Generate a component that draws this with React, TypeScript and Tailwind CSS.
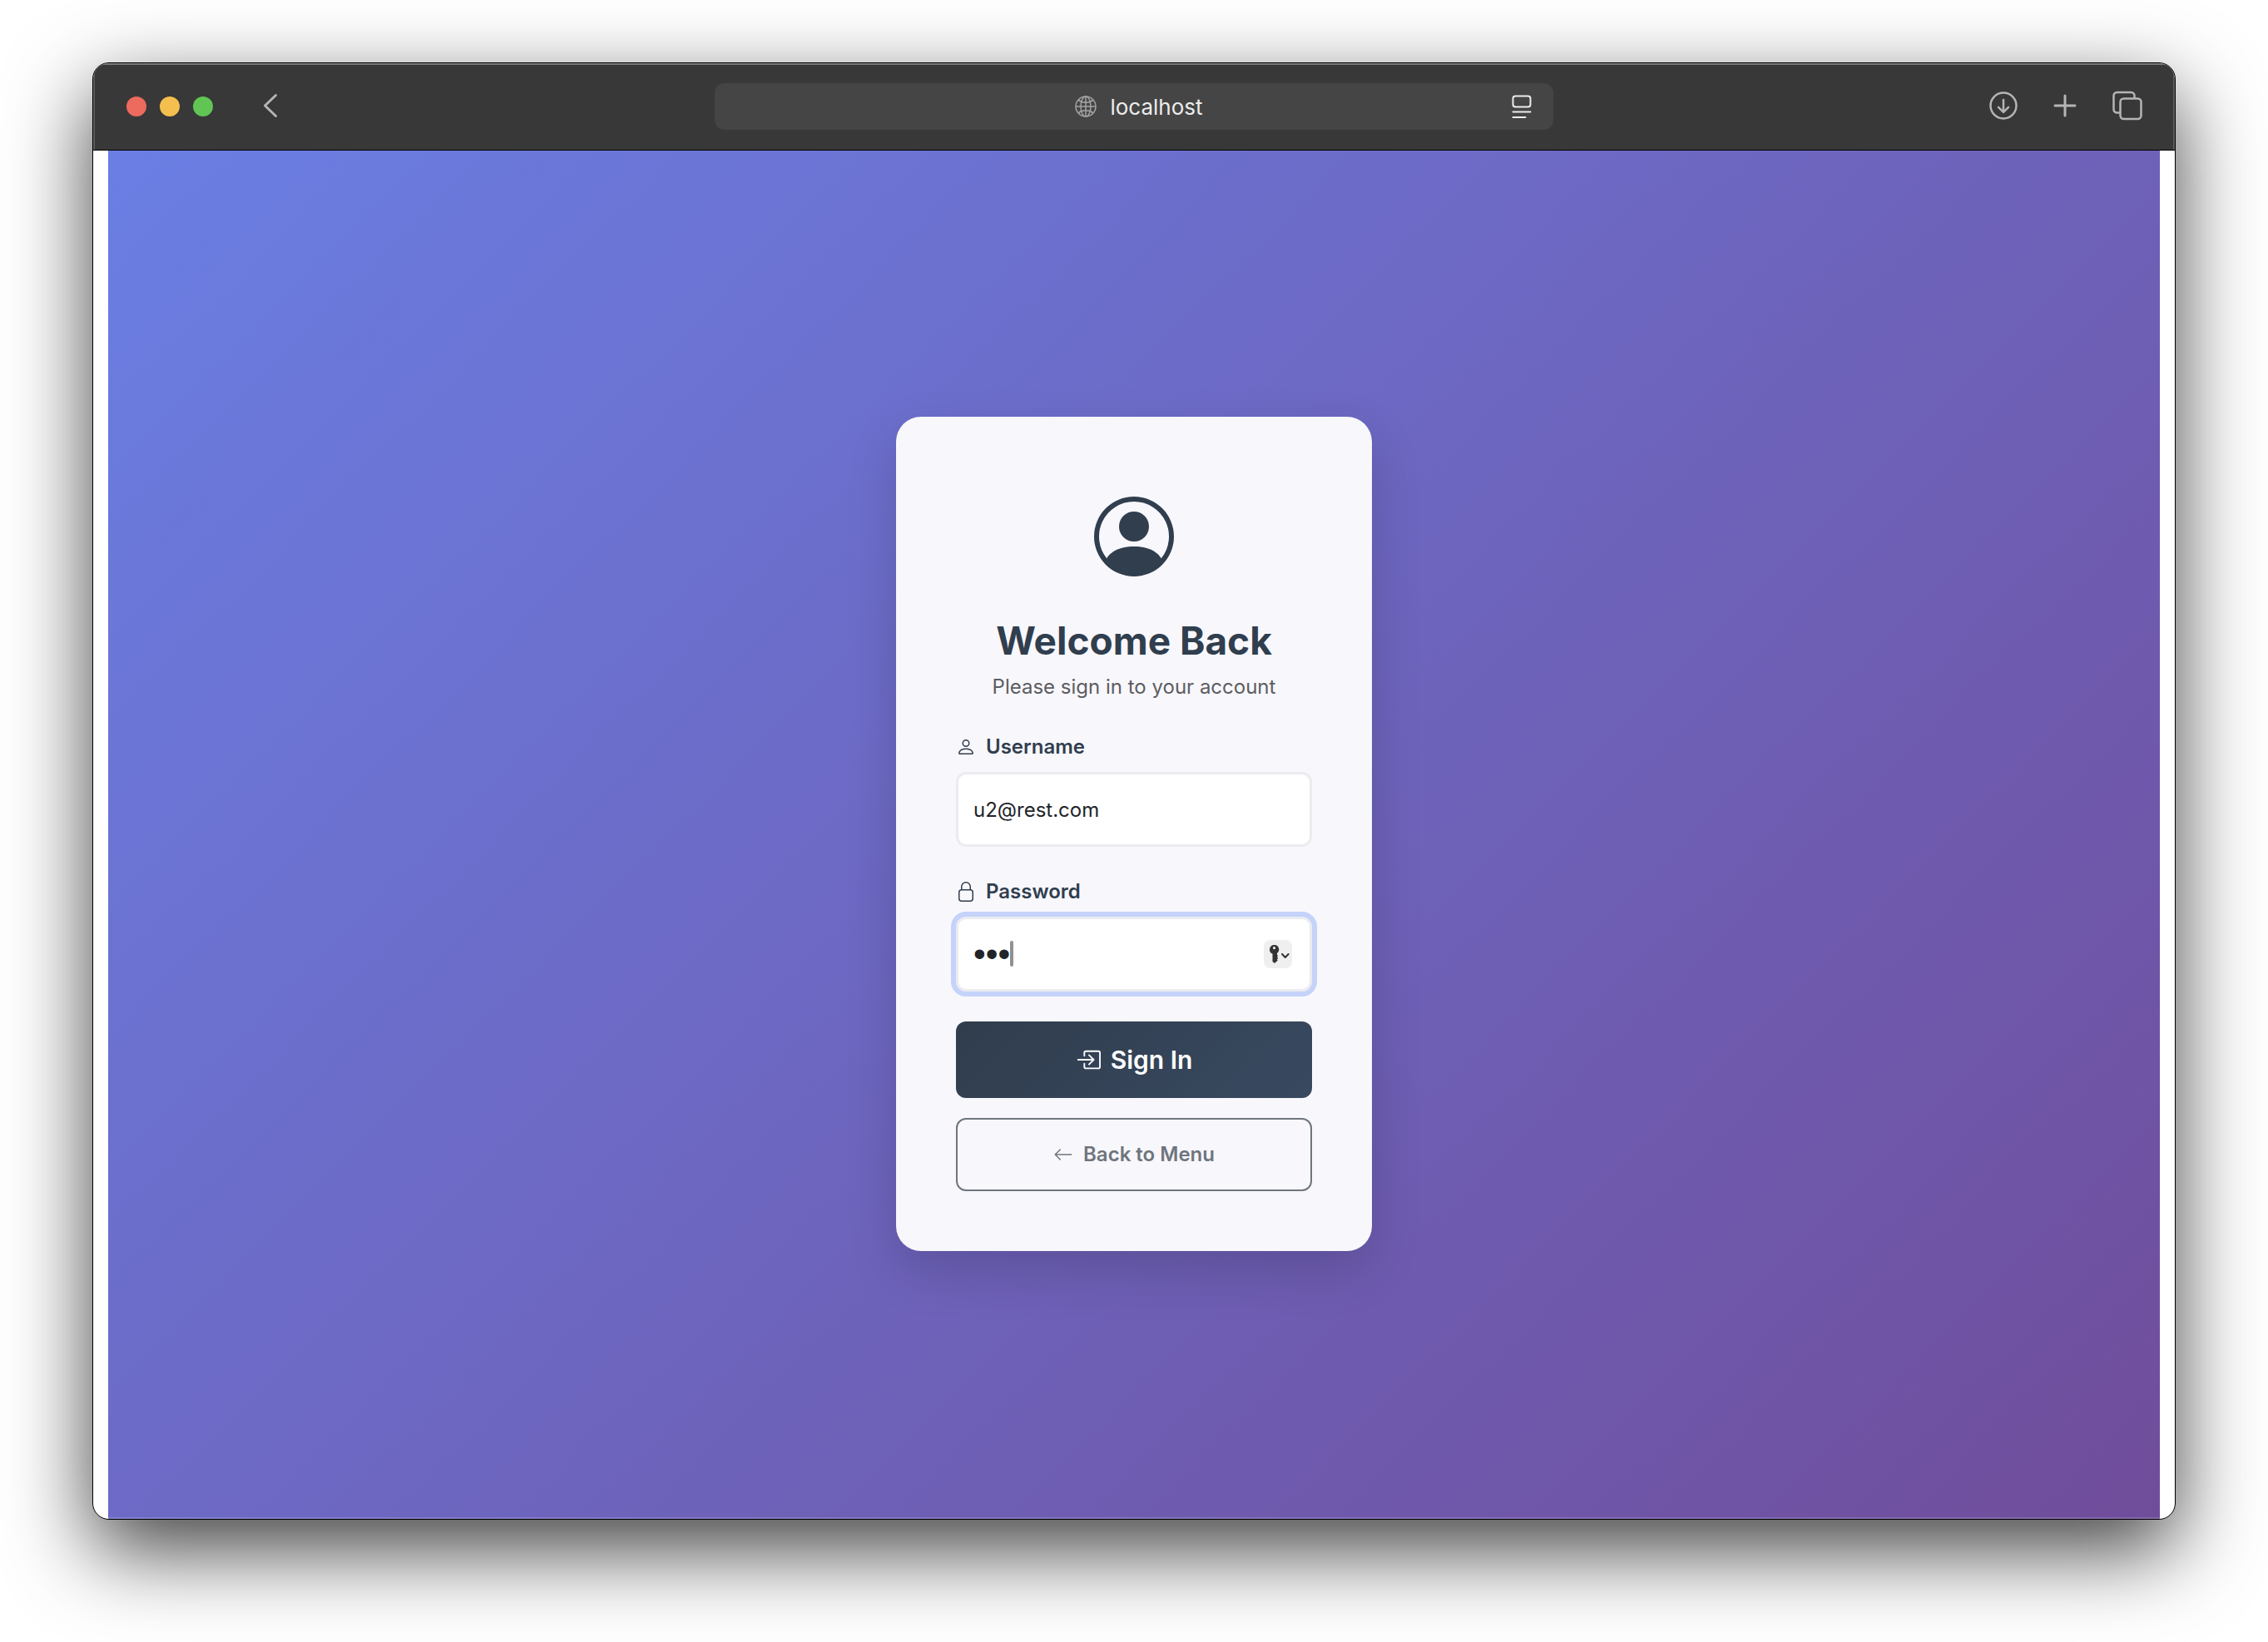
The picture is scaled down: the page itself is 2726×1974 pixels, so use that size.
import type { ReactNode } from "react";
import { BsArrowLeft, BsBoxArrowInRight, BsPersonCircle } from "react-icons/bs";

function BackChevron() {
  return (
    <svg className="h-8 w-5" viewBox="0 0 20 32" fill="none" stroke="currentColor" strokeWidth="3" strokeLinecap="round" strokeLinejoin="round" aria-hidden="true">
      <path d="M16.5 3.5 3.5 16l13 12.5" />
    </svg>
  );
}

function GlobeIcon() {
  return (
    <svg className="size-[26px] text-[#a3a3a3]" viewBox="0 0 26 26" fill="none" stroke="currentColor" strokeWidth="1.5" aria-hidden="true">
      <circle cx="13" cy="13" r="12" />
      <ellipse cx="13" cy="13" rx="6" ry="12" />
      <path d="M13 1v24M1 13h24M4 5.2c2.4 2 5.4 3 9 3s6.6-1 9-3M4 20.8c2.4-2 5.4-3 9-3s6.6 1 9 3" />
    </svg>
  );
}

function ReaderIcon() {
  return (
    <svg className="h-7 w-6" viewBox="0 0 24 28" fill="none" stroke="currentColor" strokeWidth="2" strokeLinecap="round" aria-hidden="true">
      <rect x="1.5" y="1.5" width="21" height="13" rx="3" />
      <path d="M1.5 20.5h21M1.5 27h15" />
    </svg>
  );
}

function DownloadIcon() {
  return (
    <svg className="size-[34px]" viewBox="0 0 34 34" fill="none" stroke="currentColor" strokeWidth="2.5" strokeLinecap="round" strokeLinejoin="round" aria-hidden="true">
      <circle cx="17" cy="17" r="15.5" />
      <path d="M17 10v14.5M11 18.8l6 6 6-6" />
    </svg>
  );
}

function PlusIcon() {
  return (
    <svg className="size-7" viewBox="0 0 28 28" fill="none" stroke="currentColor" strokeWidth="3" strokeLinecap="round" aria-hidden="true">
      <path d="M14 2v24M2 14h24" />
    </svg>
  );
}

function TabsIcon() {
  return (
    <svg className="size-9" viewBox="0 0 36 36" fill="none" stroke="currentColor" strokeWidth="2.5" strokeLinejoin="round" aria-hidden="true">
      <rect x="9.5" y="9.5" width="25" height="24.5" rx="4" />
      <path d="M9.5 26.5H5.5a4 4 0 0 1-4-4V6a4 4 0 0 1 4-4H22.5a4 4 0 0 1 4 4v3.5" />
    </svg>
  );
}

function PersonIcon() {
  return (
    <svg className="size-6" viewBox="0 0 16 16" fill="currentColor" aria-hidden="true">
      <path d="M8 8a3 3 0 1 0 0-6 3 3 0 0 0 0 6m2-3a2 2 0 1 1-4 0 2 2 0 0 1 4 0m4 8c0 1-1 1-1 1H3s-1 0-1-1 1-4 6-4 6 3 6 4m-1-.004c-.001-.246-.154-.986-.832-1.664C11.516 10.68 10.289 10 8 10s-3.516.68-4.168 1.332c-.678.678-.83 1.418-.832 1.664z" />
    </svg>
  );
}

function LockIcon() {
  return (
    <svg className="size-6" viewBox="0 0 16 16" fill="currentColor" aria-hidden="true">
      <path fillRule="evenodd" d="M8 0a4 4 0 0 1 4 4v2.05a2.5 2.5 0 0 1 2 2.45v5a2.5 2.5 0 0 1-2.5 2.5h-7A2.5 2.5 0 0 1 2 13.5v-5a2.5 2.5 0 0 1 2-2.45V4a4 4 0 0 1 4-4M4.5 7A1.5 1.5 0 0 0 3 8.5v5A1.5 1.5 0 0 0 4.5 15h7a1.5 1.5 0 0 0 1.5-1.5v-5A1.5 1.5 0 0 0 11.5 7zM8 1a3 3 0 0 0-3 3v2h6V4a3 3 0 0 0-3-3" />
    </svg>
  );
}

function KeyIcon() {
  return (
    <svg className="h-[22px] w-6" viewBox="0 0 24 22" aria-hidden="true">
      <path fill="currentColor" fillRule="evenodd" d="M5.5 0a5.5 5.5 0 0 1 3.5 9.9v2l1.2 1.1-1.3 1.5 1.3 1.5-1.4 1.4 1 1.2L6 22l-2.5-2V10.600A5.5 5.5 0 0 1 5.5 0zM5.5 2a1.6 1.6 0 1 0 0 3.2 1.6 1.6 0 0 0 0-3.2z" />
      <path d="M15 11l3.8 4 3.8-4" fill="none" stroke="currentColor" strokeWidth="2" strokeLinecap="round" strokeLinejoin="round" />
    </svg>
  );
}

function Toolbar() {
  return (
    <header className="grid h-[105px] shrink-0 grid-cols-[1fr_1008px_1fr] items-center border-b border-black bg-[#383838] pb-0.5 text-[#b5b5b5] shadow-[inset_2px_0_0_#5c5c5c,inset_-2px_0_0_#5c5c5c,inset_0_2px_0_#7a7a7a]">
      <div className="flex items-center pl-10">
        <div className="flex gap-4 pt-0.5">
          <button type="button" aria-label="Close" className="size-6 rounded-full bg-[#ed6a5e]" />
          <button type="button" aria-label="Minimize" className="size-6 rounded-full bg-[#f4bf4f]" />
          <button type="button" aria-label="Zoom" className="size-6 rounded-full bg-[#61c554]" />
        </div>
        <button type="button" aria-label="Back" className="ml-[59px]">
          <BackChevron />
        </button>
      </div>
      <div className="mt-0.5 flex h-14 items-center rounded-xl bg-[#454545] text-[#ececec]">
        <label className="ml-[62px] flex flex-1 items-center justify-center gap-4">
          <GlobeIcon />
          <input aria-label="Address" defaultValue="localhost" className="field-sizing-content pt-0.5 text-[26px] leading-8 outline-none" />
        </label>
        <button type="button" aria-label="Show reader" className="mr-[26px]">
          <ReaderIcon />
        </button>
      </div>
      <div className="flex items-center justify-end gap-[43px] pr-[39px]">
        <button type="button" aria-label="Downloads">
          <DownloadIcon />
        </button>
        <button type="button" aria-label="New tab">
          <PlusIcon />
        </button>
        <button type="button" aria-label="Show tabs">
          <TabsIcon />
        </button>
      </div>
    </header>
  );
}

function FieldLabel({ htmlFor, icon, children }: { htmlFor: string; icon: ReactNode; children: ReactNode }) {
  return (
    <label htmlFor={htmlFor} className="flex items-center gap-3 text-2xl leading-9 font-semibold">
      {icon}
      {children}
    </label>
  );
}

function SignInCard() {
  return (
    <section className="flex w-[572px] flex-col rounded-[30px] bg-[#f8f7fc] p-18 pt-24 text-[#303e4e] shadow-[0_24px_60px_rgba(0,0,0,0.16)]">
      <BsPersonCircle className="size-24 self-center" aria-hidden="true" />
      <h1 className="mt-12 text-center text-[46px] leading-[58px] font-bold whitespace-nowrap">Welcome Back</h1>
      <p className="mt-[9px] text-center text-2xl leading-9 text-[#5c5d61]">Please sign in to your account</p>

      <form className="mt-9 flex flex-col" onSubmit={(event) => event.preventDefault()}>
        <FieldLabel htmlFor="username" icon={<PersonIcon />}>
          Username
        </FieldLabel>
        <input
          id="username"
          type="text"
          defaultValue="u2@rest.com"
          className="mt-3 h-[90px] rounded-xl border-3 border-[#ebecf0] bg-white px-[18px] text-2xl text-[#212529] outline-none"
        />

        <div className="mt-9">
          <FieldLabel htmlFor="password" icon={<LockIcon />}>
            Password
          </FieldLabel>
        </div>
        <div className="relative mt-3">
          <input
            id="password"
            type="password"
            defaultValue="abc"
            className="block h-[90px] w-full rounded-xl border-3 border-[#ebecf0] bg-white px-[18px] font-['Liberation_Sans',sans-serif] text-[42px] text-[#212529] ring-6 ring-[#c5d3fa] outline-none"
          />
          <span className="absolute top-[29px] left-[65px] h-[31px] w-1 rounded-full bg-[#919191]" />
          <button
            type="button"
            aria-label="Fill saved password"
            className="absolute top-7 right-6 flex size-[34px] items-center justify-center rounded-lg bg-[#efefef] pl-1 text-[#333333]"
          >
            <KeyIcon />
          </button>
        </div>

        <button
          type="submit"
          className="mt-9 flex h-[92px] items-center justify-center gap-3 rounded-xl bg-[linear-gradient(135deg,#303d4d,#384960)] text-3xl font-semibold text-white"
        >
          <BsBoxArrowInRight className="size-[30px]" aria-hidden="true" />
          Sign In
        </button>
        <button
          type="button"
          className="mt-6 flex h-[88px] items-center justify-center gap-3 rounded-xl border-2 border-[#6f757d] text-2xl font-semibold text-[#6f757d]"
        >
          <BsArrowLeft className="size-6" aria-hidden="true" />
          Back to Menu
        </button>
      </form>
    </section>
  );
}

export default function App() {
  return (
    <div className="flex min-h-screen bg-white px-[111px] pt-[75px] pb-[147px] font-['Inter',sans-serif]">
      <div className="flex flex-1 flex-col overflow-hidden rounded-[20px] border border-black bg-white shadow-[0_36px_100px_rgba(0,0,0,0.75)]">
        <Toolbar />
        <main className="mx-[18px] flex flex-1 items-center justify-center bg-[linear-gradient(135deg,#6a7ee3,#704d9b)] pb-0.5 shadow-[inset_0_-2px_0_rgba(255,255,255,0.15)]">
          <SignInCard />
        </main>
      </div>
    </div>
  );
}
